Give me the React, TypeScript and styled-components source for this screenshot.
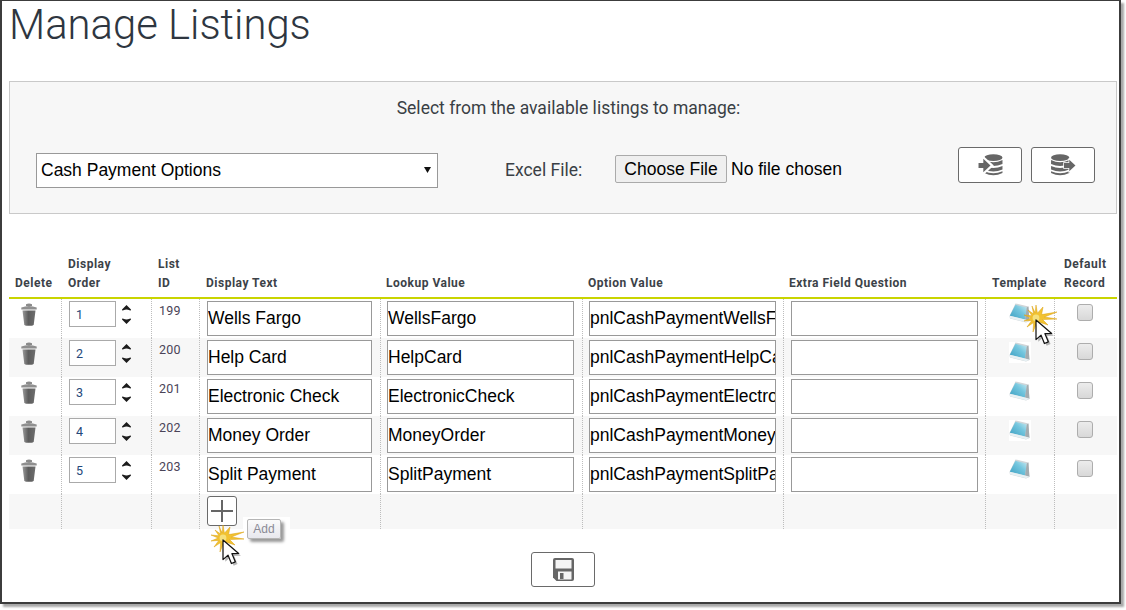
import React from "react";
import styled, { createGlobalStyle } from "styled-components";

const Global = createGlobalStyle`
  html, body { margin: 0; padding: 0; background: #fff; }
  body { font-family: Roboto, "Liberation Sans", sans-serif; width: 1126px; height: 610px; overflow: hidden; }
`;
const Frame = styled.div`
  position: relative; box-sizing: border-box; width: 1121px; height: 604px;
  border: solid #3c3c3c; border-width: 1px 2px 2px 2px; box-shadow: 3px 3px 2px #a8a8a8;
  padding: 0 2px 0 7px; background: #fff;
`;
const Title = styled.h1`
  margin: 0; height: 80px; font: 300 41.8px/48px Roboto, sans-serif; color: #2e3640;
`;
const Panel = styled.section`
  box-sizing: border-box; height: 133px; background: #f7f7f7; border: 1px solid #c9c9c9;
  display: flex; flex-direction: column; padding: 16px 0 0 11px;
`;
const PanelTitle = styled.div`
  text-align: center; font: 400 17.5px/20px Roboto, sans-serif; color: #3a3f45;
`;
const PanelRow = styled.div`
  display: flex; align-items: flex-start; margin: 29px 0 0 -11px; padding-left: 26px; height: 36px;
`;
const SelectWrap = styled.div`
  position: relative; width: 402px; height: 35px; margin-top: 6px;
  &::after { content: ""; position: absolute; right: 7px; top: 14px; width: 7px; height: 6px;
    background: #111; clip-path: polygon(0 0, 100% 0, 50% 100%); }
`;
const ListSelect = styled.select`
  appearance: none; box-sizing: border-box; display: block; width: 100%; height: 35px; border: 1px solid #999; background: #fff; border-radius: 0;
  font: 17.5px "Liberation Sans", sans-serif; color: #000; padding: 0 0 2px 4px;
`;
const ExcelLabel = styled.label`
  margin: 13px 0 0 67px; width: 110px; font: 400 17.5px/20px Roboto, sans-serif; color: #3a3f45;
`;
const FileField = styled.input`
  width: 343px; margin-top: 8px; font: 17.5px "Liberation Sans", sans-serif; color: #000;
  &::file-selector-button { font: 17.5px "Liberation Sans", sans-serif; height: 28px; width: 112px; padding: 0; margin-right: 4px;
    background: #efefef; border: 1px solid #aaa; border-radius: 2px; color: #000; }
`;
const IconButton = styled.button<{ $gap?: number; $h?: number }>`
  box-sizing: border-box; width: 64px; height: ${p => p.$h ?? 36}px; background: #fff; border: 1px solid #6a6a6a; border-radius: 3px;
  display: flex; align-items: center; justify-content: center; padding: 0; margin-left: ${p => p.$gap ?? 0}px;
`;
const TableWrap = styled.div`
  margin-top: 39px;
`;
const cols = "53px 90px 48px 181px 202px 201px 202px 69px 62px";
const Head = styled.div`
  display: grid; grid-template-columns: ${cols}; height: 44px; border-bottom: 2px solid #c9d400;
`;
const HeadCell = styled.div<{ $pl: number }>`
  align-self: end; font: 700 12px/19px Roboto, sans-serif; color: #3c4248; letter-spacing: .5px; padding: 0 0 4px ${p => p.$pl}px;
`;
const Row = styled.div<{ $alt: boolean; $h?: number }>`
  display: grid; grid-template-columns: ${cols}; height: ${p => p.$h ?? 39}px; background: ${p => (p.$alt ? "#f7f7f7" : "#fff")};
`;
const Cell = styled.div<{ $last?: boolean }>`
  box-sizing: border-box; border-right: ${p => (p.$last ? "none" : "1px dotted #bdbdbd")};
  display: flex; align-items: flex-start;
`;
const TrashCell = styled(Cell)`padding: 4px 0 0 12px;`;
const OrderCell = styled(Cell)`padding: 2px 0 0 7px; gap: 3px;`;
const NumBox = styled.input`
  box-sizing: border-box; width: 47px; height: 26px; border: 1px solid #aaa; background: #fff; padding: 0 0 0 6px;
  font: 400 12.5px Roboto, sans-serif; color: #24477a; outline: none;
`;
const Spin = styled.div`
  display: flex; flex-direction: column; align-items: center; margin-left: 3px; gap: 7px; padding-top: 4px;
`;
const IdCell = styled(Cell)`
  padding: 4px 0 0 7px; font: 400 12.5px/16px Roboto, sans-serif; color: #4a4458; letter-spacing: .2px;
`;
const TextCell = styled(Cell)<{ $pl: number }>`padding: 2px 0 0 ${p => p.$pl}px;`;
const TextBox = styled.input<{ $w: number }>`
  box-sizing: border-box; width: ${p => p.$w}px; height: 35px; border: 1px solid #999; background: #fff; padding: 0;
  font: 17.5px "Liberation Sans", sans-serif; color: #000; outline: none;
`;
const TemplateCell = styled(Cell)`padding: 4px 0 0 23px;`;
const CheckCell = styled(Cell)`padding: 5px 0 0 22px;`;
const Check = styled.span`
  display: block; box-sizing: border-box; width: 16px; height: 17px; border: 1px solid #adadad; border-radius: 3px;
  background: linear-gradient(#ececec, #d8d8d8);
`;
const AddButton = styled.button`
  box-sizing: border-box; width: 30px; height: 30px; margin: 2px 0 0 7px; padding: 0; background: #fff;
  border: 1px solid #6a6a6a; border-radius: 3px; display: flex; align-items: center; justify-content: center;
`;
const SaveRow = styled.div`
  display: flex; justify-content: flex-start; margin-top: 23px; padding-left: 522px;
`;
const TipPatch = styled.div`
  position: absolute; left: 241px; top: 516px; box-sizing: border-box; width: 47px; height: 28px; background: #fff; padding: 2px 0 0 4px;
`;
const Tip = styled.div`
  box-sizing: border-box; width: 34px; height: 20px; border: 1px solid #b5b5b5; border-radius: 2px;
  background: linear-gradient(#fafafa, #e8e8ee); box-shadow: 3px 3px 3px #9a9a9a; text-align: center;
  font: 400 12px/18px "Liberation Sans", sans-serif; color: #8a8a96;
`;
const Pointer = styled.svg<{ $x: number; $y: number }>`
  position: absolute; left: ${p => p.$x}px; top: ${p => p.$y}px; overflow: visible;
`;

const Trash = () => (
  <svg width="16" height="23" viewBox="0 0 16 23">
    <defs><linearGradient id="tg" x1="0" x2="1" y1="0" y2="0"><stop offset="0" stopColor="#9a9a9a"/><stop offset=".45" stopColor="#5c5c5c"/><stop offset="1" stopColor="#6e6e6e"/></linearGradient></defs>
    <path d="M5 1.2Q8 0 11 1.2V3H5Z" fill="#8a8a8a"/>
    <path d="M0.3 4.5Q8 1.5 15.7 4.5V6.5H0.3Z" fill="#8f8f8f"/>
    <path d="M1.5 7.5H14.5L12.8 21.3Q12.5 22.7 11 22.7H5Q3.5 22.7 3.2 21.3Z" fill="url(#tg)"/>
  </svg>
);
const Spinner = () => (
  <Spin>
    <svg width="9" height="6" viewBox="0 0 9 6"><path d="M4.5 0L9 4.6Q9 6 7.6 5.3Q4.5 3.8 1.4 5.3Q0 6 0 4.6Z" fill="#1c1c1c"/></svg>
    <svg width="9" height="6" viewBox="0 0 9 6"><path d="M4.5 6L9 1.4Q9 0 7.6 .7Q4.5 2.2 1.4 .7Q0 0 0 1.4Z" fill="#1c1c1c"/></svg>
  </Spin>
);
const TemplateIcon = ({ i }: { i: number }) => (
  <svg width="22" height="21" viewBox="0 0 22 21">
    <defs><linearGradient id={`bk${i}`} x1="0" y1="1" x2="1" y2="0"><stop offset="0" stopColor="#3a9fc2"/><stop offset=".6" stopColor="#74c6de"/><stop offset="1" stopColor="#c8e9f1"/></linearGradient></defs>
    <rect width="22" height="21" fill="#fff"/>
    <path d="M6.5 0.5L19.5 3.5L20.5 18L17 19.5L1 15.5L0.5 13Z" fill="#cfd5d8"/>
    <path d="M6.5 1.8L17.8 4.6L16 16.5L0.8 12.8Z" fill={`url(#bk${i})`}/>
    <path d="M17.8 4.6L19.4 3.6L20.4 17.8L16 16.5Z" fill="#a3abaf"/>
    <path d="M0.8 12.8L16 16.5L20.4 17.8L17 19.2L1 15.2Z" fill="#e8f1f4"/>
  </svg>
);
const DbStack = ({ cx }: { cx: number }) => (
  <g fill="#666">
    <ellipse cx={cx} cy="3.8" rx="9.5" ry="3.6"/>
    <path d={`M${cx - 9.5} 6.2Q${cx} 11 ${cx + 9.5} 6.2V10.5Q${cx} 14.6 ${cx - 9.5} 10.5Z`}/>
    <path d={`M${cx - 9.5} 12.5Q${cx} 16.8 ${cx + 9.5} 12.5V16.2Q${cx} 20.4 ${cx - 9.5} 16.2Z`}/>
    <path d={`M${cx - 9.5} 18Q${cx} 22 ${cx + 9.5} 18V19.8Q${cx} 24.6 ${cx - 9.5} 19.8Z`}/>
  </g>
);
const DbIn = () => (
  <svg width="25" height="23" viewBox="0 0 25 24">
    <DbStack cx={15.5} />
    <path d="M4 1L16 12L4 23Z" fill="#fff"/>
    <path d="M0 9.5H5V5L12.5 12L5 19V14.5H0Z" fill="#666"/>
  </svg>
);
const DbOut = () => (
  <svg width="25" height="23" viewBox="0 0 25 24">
    <DbStack cx={9} />
    <path d="M13 9.5H18.5V6L25 12L18.5 18V14.5H13Z" fill="#666" stroke="#fff" strokeWidth="1.6" paintOrder="stroke"/>
  </svg>
);
const Plus = () => (
  <svg width="22" height="22" viewBox="0 0 22 22" fill="#666"><rect x="10" y="0" width="2" height="22"/><rect x="0" y="10" width="22" height="2"/></svg>
);
const Floppy = () => (
  <svg width="21" height="23" viewBox="0 0 21 23">
    <path d="M2 0H19Q21 0 21 2V21Q21 23 19 23H3.5L0 19.5V2Q0 0 2 0Z" fill="#666"/>
    <rect x="2.5" y="2" width="16" height="8.5" fill="#f4f4f4"/>
    <rect x="5" y="13.5" width="13.5" height="8" fill="#f4f4f4"/>
    <rect x="7" y="15" width="3.5" height="6" fill="#666"/>
  </svg>
);
const Burst = ({ x, y }: { x: number; y: number }) => {
  const rays = [[0,-13],[7,-11],[21,-6],[21,1],[12,7],[5,14],[-3,14],[-9,9],[-12,3],[-12,-3],[-8,-8],[-4,-12]];
  const pts = rays.flatMap(([a, b], i) => {
    const n = rays[(i + 1) % rays.length];
    return [`${a},${b}`, `${(a + n[0]) * 0.2},${(b + n[1]) * 0.2}`];
  }).join(" ");
  return (
    <Pointer $x={x} $y={y} width="1" height="1">
      <polygon points={pts} fill="#f2c230" stroke="#dba012" strokeWidth=".5"/>
      <circle r="3.4" fill="#f5e07c"/>
    </Pointer>
  );
};
const Arrow = ({ x, y }: { x: number; y: number }) => (
  <Pointer $x={x} $y={y} width="1" height="1">
    <g transform="scale(1.12)">
      <path d="M0 0L0 17.5L4.5 13.5L7.5 21L11 19.5L8 12.2L14 12Z" fill="#000" opacity=".28" transform="translate(2 2)"/>
      <path d="M0 0L0 17.5L4.5 13.5L7.5 21L11 19.5L8 12.2L14 12Z" fill="#fff" stroke="#111" strokeWidth="1.1" strokeLinejoin="round"/>
    </g>
  </Pointer>
);

const rows = [
  { o: 1, id: 199, t: "Wells Fargo", l: "WellsFargo", v: "pnlCashPaymentWellsFargo" },
  { o: 2, id: 200, t: "Help Card", l: "HelpCard", v: "pnlCashPaymentHelpCard" },
  { o: 3, id: 201, t: "Electronic Check", l: "ElectronicCheck", v: "pnlCashPaymentElectronicCheck" },
  { o: 4, id: 202, t: "Money Order", l: "MoneyOrder", v: "pnlCashPaymentMoneyOrder" },
  { o: 5, id: 203, t: "Split Payment", l: "SplitPayment", v: "pnlCashPaymentSplitPayment" },
];
const heads: { lines: string[]; pl: number }[] = [
  { lines: ["Delete"], pl: 6 },
  { lines: ["Display", "Order"], pl: 6 },
  { lines: ["List", "ID"], pl: 6 },
  { lines: ["Display Text"], pl: 6 },
  { lines: ["Lookup Value"], pl: 5 },
  { lines: ["Option Value"], pl: 5 },
  { lines: ["Extra Field Question"], pl: 5 },
  { lines: ["Template"], pl: 6 },
  { lines: ["Default", "Record"], pl: 9 },
];

export default function App() {
  return (
    <Frame>
      <Global />
      <Title>Manage Listings</Title>
      <Panel>
        <PanelTitle>Select from the available listings to manage:</PanelTitle>
        <PanelRow>
          <SelectWrap>
            <ListSelect defaultValue="Cash Payment Options"><option>Cash Payment Options</option></ListSelect>
          </SelectWrap>
          <ExcelLabel>Excel File:</ExcelLabel>
          <FileField type="file" />
          <IconButton aria-label="Import"><DbIn /></IconButton>
          <IconButton $gap={9} aria-label="Export"><DbOut /></IconButton>
        </PanelRow>
      </Panel>
      <TableWrap>
        <Head>
          {heads.map(h => (
            <HeadCell key={h.lines.join()} $pl={h.pl}>{h.lines.map(w => <div key={w}>{w}</div>)}</HeadCell>
          ))}
        </Head>
        {rows.map((r, i) => (
          <Row key={r.id} $alt={i % 2 === 1}>
            <TrashCell><Trash /></TrashCell>
            <OrderCell><NumBox readOnly value={r.o} /><Spinner /></OrderCell>
            <IdCell>{r.id}</IdCell>
            <TextCell $pl={7}><TextBox $w={165} readOnly value={r.t} /></TextCell>
            <TextCell $pl={6}><TextBox $w={187} readOnly value={r.l} /></TextCell>
            <TextCell $pl={6}><TextBox $w={187} readOnly value={r.v} /></TextCell>
            <TextCell $pl={7}><TextBox $w={187} readOnly value="" /></TextCell>
            <TemplateCell><TemplateIcon i={i} /></TemplateCell>
            <CheckCell $last><Check /></CheckCell>
          </Row>
        ))}
        <Row $alt $h={35}>
          <Cell /><Cell /><Cell />
          <Cell><AddButton aria-label="Add"><Plus /></AddButton></Cell>
          <Cell /><Cell /><Cell /><Cell /><Cell $last />
        </Row>
      </TableWrap>
      <SaveRow><IconButton $h={35} aria-label="Save"><Floppy /></IconButton></SaveRow>
      <TipPatch><Tip>Add</Tip></TipPatch>
      <Burst x={1034} y={317} />
      <Arrow x={1034} y={319} />
      <Burst x={221} y={537} />
      <Arrow x={221} y={539} />
    </Frame>
  );
}
